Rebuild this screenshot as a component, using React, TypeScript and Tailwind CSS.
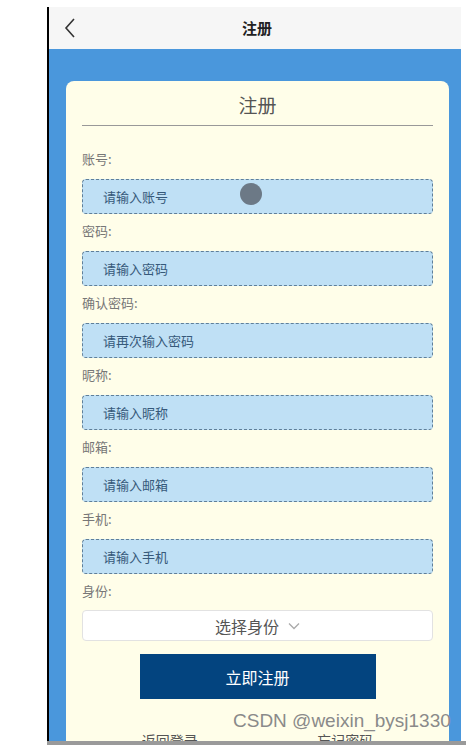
import React from "react";

const fields = [
  { label: "账号:", placeholder: "请输入账号" },
  { label: "密码:", placeholder: "请输入密码" },
  { label: "确认密码:", placeholder: "请再次输入密码" },
  { label: "昵称:", placeholder: "请输入昵称" },
  { label: "邮箱:", placeholder: "请输入邮箱" },
  { label: "手机:", placeholder: "请输入手机" },
];

export default function App() {
  return (
    <div
      className="relative w-[466px] h-[745px] overflow-hidden bg-white pt-[7px]"
      style={{ fontFamily: '"Noto Sans CJK SC", "Liberation Sans", sans-serif' }}
    >
      <div className="ml-[47px] w-[414px] h-[734px] border-l-2 border-black flex flex-col">
        {/* top bar */}
        <header className="relative h-[42px] shrink-0 bg-[#f6f6f6] flex items-center justify-center">
          <svg
            className="absolute left-[15px] top-[11px]"
            width="12"
            height="20"
            viewBox="0 0 12 20"
            fill="none"
            stroke="#333"
            strokeWidth="1.6"
          >
            <path d="M10 1 L2 10 L10 19" />
          </svg>
          <h1 className="text-[15px] font-bold text-[#222] ml-[4px]">注册</h1>
        </header>

        <div className="flex-1 bg-[#4a97dc] pt-[32px] pl-[17px] pr-[12px] overflow-hidden">
          <div className="bg-[#fffee9] rounded-t-[8px] px-[16px] pt-[12px] h-[700px]">
            <h2 className="text-center text-[19px] leading-[24px] text-[#555]">注册</h2>
            <div className="mt-[8px] h-px bg-[#999]" />

            <div className="mt-[24px] flex flex-col">
              {fields.map((f) => (
                <div key={f.label} className="flex flex-col pb-[8px]">
                  <label className="text-[13px] leading-[18px] text-[#777]">{f.label}</label>
                  <div className="mt-[11px] h-[35px] rounded-[4px] border border-dashed border-[#5f7f99] bg-[#bfe0f5] flex items-center pl-[20px]">
                    <span className="text-[13px] text-[#36597a]">{f.placeholder}</span>
                  </div>
                </div>
              ))}

              <label className="text-[13px] leading-[18px] text-[#777]">身份:</label>
              <div className="mt-[10px] h-[31px] rounded-[4px] border border-[#e2e2e2] bg-white flex items-center justify-center gap-[9px]">
                <span className="text-[16px] text-[#555]">选择身份</span>
                <svg width="12" height="8" viewBox="0 0 12 8" fill="none" stroke="#aaa" strokeWidth="1.3">
                  <path d="M1 1.5 L6 6.5 L11 1.5" />
                </svg>
              </div>

              <button className="mt-[13px] self-center w-[236px] h-[45px] bg-[#03447f] text-white text-[16px]">
                立即注册
              </button>

              <div className="mt-[31px] flex">
                <span className="flex-1 text-center text-[14px] text-[#555]">返回登录</span>
                <span className="flex-1 text-center text-[14px] text-[#555]">忘记密码</span>
              </div>
            </div>
          </div>
        </div>
      </div>

      {/* touch indicator */}
      <div className="absolute left-[240px] top-[183px] w-[22px] h-[22px] rounded-full bg-[#6c7986]" />

      {/* watermark */}
      <div
        className="absolute left-[233px] top-[709px] text-[19px] leading-[24px] text-[#8a8a8a] whitespace-nowrap"
        style={{ fontFamily: '"Liberation Sans", Arial, sans-serif' }}
      >
        CSDN @weixin_bysj1330
      </div>

      {/* bottom edge */}
      <div className="absolute left-[47px] right-0 bottom-0 h-[4px] bg-[#9a9a9a]" />
    </div>
  );
}
